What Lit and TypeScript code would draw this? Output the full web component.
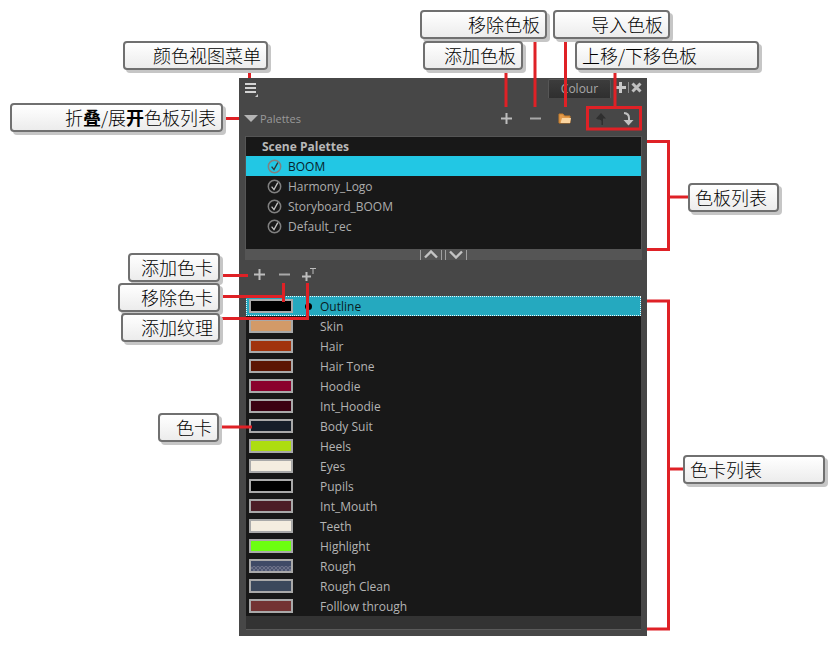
import { LitElement, html, css, svg } from "lit";
import { customElement } from "lit/decorators.js";

interface Callout { x: number; y: number; w: number; left?: boolean; text: unknown; }

const callouts: Callout[] = [
  { x: 123, y: 41, w: 145, text: "颜色视图菜单" },
  { x: 10, y: 103, w: 213, text: html`折<b>叠</b>/展<b>开</b>色板列表` },
  { x: 420, y: 10, w: 127, text: "移除色板" },
  { x: 553, y: 10, w: 117, text: "导入色板" },
  { x: 423, y: 41, w: 100, text: "添加色板" },
  { x: 575, y: 41, w: 184, left: true, text: "上移/下移色板" },
  { x: 688, y: 183, w: 91, left: true, text: "色板列表" },
  { x: 683, y: 455, w: 142, left: true, text: "色卡列表" },
  { x: 128, y: 253, w: 92, text: "添加色卡" },
  { x: 118, y: 283, w: 102, text: "移除色卡" },
  { x: 121, y: 313, w: 99, text: "添加纹理" },
  { x: 158, y: 413, w: 61, text: "色卡" },
];

const leaders: string[] = [
  "M249.5 70V78",
  "M223 118.5H239",
  "M506 70V107",
  "M535 39V107",
  "M565.5 39V107",
  "M615 70V106",
  "M587.5 107.5H640.5V129H587.5Z",
  "M647 141.5H668.5V249.5H647",
  "M668.5 197H688",
  "M647 301H668.5V629H647",
  "M668.5 469H683",
  "M220 275.5H248",
  "M220 296.5H283.5V302M283.5 283V296.5",
  "M220 318.5H307.5V283",
  "M219 427H252",
];

const palettes = ["BOOM", "Harmony_Logo", "Storyboard_BOOM", "Default_rec"];

const swatches: [string, string][] = [
  ["Outline", "#000000"], ["Skin", "#d39a68"], ["Hair", "#a1330c"], ["Hair Tone", "#5c1503"],
  ["Hoodie", "#8a002c"], ["Int_Hoodie", "#3b0011"], ["Body Suit", "#161e29"], ["Heels", "#addd10"],
  ["Eyes", "#f4ede0"], ["Pupils", "#000000"], ["Int_Mouth", "#4c1d26"], ["Teeth", "#f4ede0"],
  ["Highlight", "#6cff10"], ["Rough", "#3f4a66"], ["Rough Clean", "#3b485c"], ["Folllow through", "#733333"],
];

const plusIcon = html`<svg width="13" height="13" viewBox="0 0 13 13"><path d="M6.5 1V12M1 6.5H12" stroke="#bdbdbd" stroke-width="2" fill="none"/></svg>`;
const minusIcon = html`<svg width="13" height="13" viewBox="0 0 13 13"><path d="M1 6.5H12" stroke="#a8a8a8" stroke-width="2" fill="none"/></svg>`;
const checkIcon = html`<svg class="check" width="15" height="15" viewBox="0 0 15 15"><circle cx="7.5" cy="7.5" r="6.2" fill="none" stroke="#808080" stroke-width="1.5"/><path d="M4.6 7.6L7 10.6L10.8 3.6" fill="none" stroke="currentColor" stroke-width="1.3"/></svg>`;

@customElement("app-root")
export class AppRoot extends LitElement {
  static styles = css`
    :host { display: block; width: 840px; height: 646px; background: #fff; overflow: hidden; }
    .stage { position: relative; width: 840px; height: 646px; font-family: "Open Sans", "Noto Sans", sans-serif; }

    .panel {
      position: absolute; left: 239px; top: 78px; width: 408px; height: 558px;
      box-sizing: border-box; padding: 0 6px 6px 7px;
      background: #474747; display: flex; flex-direction: column;
    }
    .title { height: 28px; flex: none; display: flex; align-items: flex-start; }
    .menu { margin: 4px 0 0 -1px; }
    .tab {
      margin: 1px 0 0 auto; width: 63px; height: 19px; box-sizing: border-box;
      border: 1px solid #565656; border-bottom: none; border-radius: 2px 2px 0 0;
      background: linear-gradient(#3c3c3c, #2f2f2f);
      color: #a9a9a9; font-size: 12px; line-height: 18px; text-align: center;
    }
    .winbtns { display: flex; align-items: center; margin: 4px -1px 0 4px; gap: 2px; }
    .sep { width: 1px; height: 11px; background: #8a8a8a; }

    .toolbar { flex: none; display: flex; align-items: center; }
    .toolbar.top { height: 31px; padding-bottom: 6px; box-sizing: border-box; }
    .toolbar.low { height: 36px; padding: 0 0 8px 1px; box-sizing: border-box; }
    .collapse { display: flex; align-items: center; gap: 2px; margin-left: -2px; margin-right: auto; color: #9a9a9a; font-size: 11px; }
    .btn { display: flex; align-items: center; justify-content: center; width: 29px; flex: none; }
    .btn.narrow { width: 25px; }
    .btn.last { width: 26px; }
    .btn.spaced { margin-left: 7px; }

    .list { background: #181818; flex: none; font-size: 12px; color: #b4b4b4; box-sizing: border-box; }
    .palettes { height: 112px; outline: 1px solid #555; outline-offset: 0; }
    .head { height: 19px; line-height: 19px; padding-left: 16px; font-weight: 700; color: #b8b8b8; }
    .prow { height: 20px; display: flex; align-items: center; padding-left: 21px; gap: 6px; color: #adadad; }
    .prow.sel { background: #22c7e4; color: #08222a; }
    .check { color: #c4c4c4; flex: none; }
    .prow.sel .check { color: #333; }

    .splitter {
      flex: none; height: 11px; margin: 0 -1px; background: #555; display: flex;
      align-items: center; justify-content: center; gap: 3px;
    }
    .tick { width: 1px; height: 10px; background: #a0a0a0; }

    .swatches { height: 320px; }
    .srow { position: relative; height: 20px; display: flex; align-items: center; padding-left: 3px; box-sizing: border-box; }
    .srow.sel { background: #25a9bf; outline: 1px dotted #e8f8fb; outline-offset: -1px; color: #0a1c22; }
    .swatch { width: 44px; height: 14px; box-sizing: border-box; border: 2px solid #a9a9a9; flex: none; }
    .swatch.rough {
      background-image:
        linear-gradient(#3f4a66 50%, transparent 50%),
        repeating-conic-gradient(#6b7088 0 25%, #4c5570 0 50%);
      background-size: 100% 100%, 4px 4px;
    }
    .dot { width: 7px; flex: none; height: 7px; border-radius: 50%; margin-left: 12px; }
    .srow.sel .dot { background: #000; }
    .sname { margin-left: 8px; }
    .footer { flex: none; height: 13px; background: #333; }
    .footline { flex: none; height: 1px; background: #5a5a5a; }

    .leaders { position: absolute; left: 0; top: 0; pointer-events: none; }
    .leaders path { fill: none; stroke: #df2126; stroke-width: 3; }

    .callout {
      position: absolute; height: 29px; box-sizing: border-box;
      border: 2px solid #707070; border-radius: 4px;
      background: linear-gradient(#ffffff, #ececec);
      box-shadow: 3px 3px 0 #c6c6c6;
      font-family: "Noto Sans CJK SC", sans-serif; font-size: 18px; font-weight: 300; line-height: 25px;
      color: #000; text-align: right; padding: 0 5px; white-space: nowrap; overflow: hidden;
    }
    .callout.left { text-align: left; }
    .callout b { font-weight: 700; }
  `;

  render() {
    return html`
      <div class="stage">
        <div class="panel">
          <div class="title">
            <svg class="menu" width="14" height="16" viewBox="0 0 14 16">
              <path d="M0 2H11M0 6H11M0 10H11" stroke="#d4d4d4" stroke-width="2" fill="none"/>
              <path d="M13 12V15H10Z" fill="#c8c8c8"/>
            </svg>
            <div class="tab">Colour</div>
            <div class="winbtns">
              <svg width="11" height="11" viewBox="0 0 11 11"><path d="M5.5 0V11M0 5.5H11" stroke="#c8c8c8" stroke-width="3" fill="none"/></svg>
              <span class="sep"></span>
              <svg width="11" height="11" viewBox="0 0 11 11"><path d="M1.5 1.5L9.5 9.5M9.5 1.5L1.5 9.5" stroke="#c0c0c0" stroke-width="3" fill="none"/></svg>
            </div>
          </div>

          <div class="toolbar top">
            <div class="collapse">
              <svg width="14" height="8" viewBox="0 0 14 8"><path d="M0 0H14L7 7Z" fill="#b4b4b4"/></svg>
              <span>Palettes</span>
            </div>
            <div class="btn">${plusIcon}</div>
            <div class="btn">${minusIcon}</div>
            <div class="btn">
              <svg width="14" height="11" viewBox="0 0 14 11">
                <path d="M1 1H5L6.5 3H12V10H1Z" fill="#e39a4a" stroke="#c47c2c" stroke-width="1"/>
                <path d="M4 5H13L12 10H2.5Z" fill="#fbd5a0"/>
              </svg>
            </div>
            <div class="btn spaced">
              <svg width="12" height="14" viewBox="0 0 12 14"><path d="M6 1L11 6.5H8V13H6.5V9Q6 7 3 7.5L1 6.5Z" fill="#2f2f2f"/></svg>
            </div>
            <div class="btn last">
              <svg width="12" height="14" viewBox="0 0 12 14"><path d="M2 1Q7 1.5 7 6V9" fill="none" stroke="#c0c0c0" stroke-width="2"/><path d="M1.5 8H11.5L6.5 13.5Z" fill="#c0c0c0"/></svg>
            </div>
          </div>

          <div class="list palettes">
            <div class="head">Scene Palettes</div>
            ${palettes.map((p, i) => html`<div class="prow ${i === 0 ? "sel" : ""}">${checkIcon}<span>${p}</span></div>`)}
          </div>

          <div class="splitter">
            <span class="tick"></span>
            <svg width="14" height="9" viewBox="0 0 14 9"><path d="M1 7.5L7 1.5L13 7.5" fill="none" stroke="#c4c4c4" stroke-width="2.4"/></svg>
            <span class="tick"></span><span class="tick"></span>
            <svg width="14" height="9" viewBox="0 0 14 9"><path d="M1 1.5L7 7.5L13 1.5" fill="none" stroke="#c4c4c4" stroke-width="2.4"/></svg>
            <span class="tick"></span>
          </div>

          <div class="toolbar low">
            <div class="btn narrow">${plusIcon}</div>
            <div class="btn narrow">${minusIcon}</div>
            <div class="btn narrow">
              <svg width="15" height="15" viewBox="0 0 15 15">
                <path d="M4.5 5V14M0 9.5H9" stroke="#bdbdbd" stroke-width="2" fill="none"/>
                <path d="M8 1.5H14M11 1.5V7" stroke="#bdbdbd" stroke-width="1" fill="none"/>
              </svg>
            </div>
          </div>

          <div class="list swatches">
            ${swatches.map(([n, c], i) => html`
              <div class="srow ${i === 0 ? "sel" : ""}">
                <span class="swatch ${n === "Rough" ? "rough" : ""}" style="background-color:${c}"></span>
                <span class="dot"></span>
                <span class="sname">${n}</span>
              </div>`)}
          </div>
          <div class="footer"></div>
          <div class="footline"></div>
        </div>

        <svg class="leaders" width="840" height="646" viewBox="0 0 840 646">
          ${leaders.map((d) => svg`<path d=${d}></path>`)}
        </svg>

        ${callouts.map((c) => html`
          <div class="callout ${c.left ? "left" : ""}" style="left:${c.x}px;top:${c.y}px;width:${c.w}px">${c.text}</div>`)}
      </div>
    `;
  }
}
